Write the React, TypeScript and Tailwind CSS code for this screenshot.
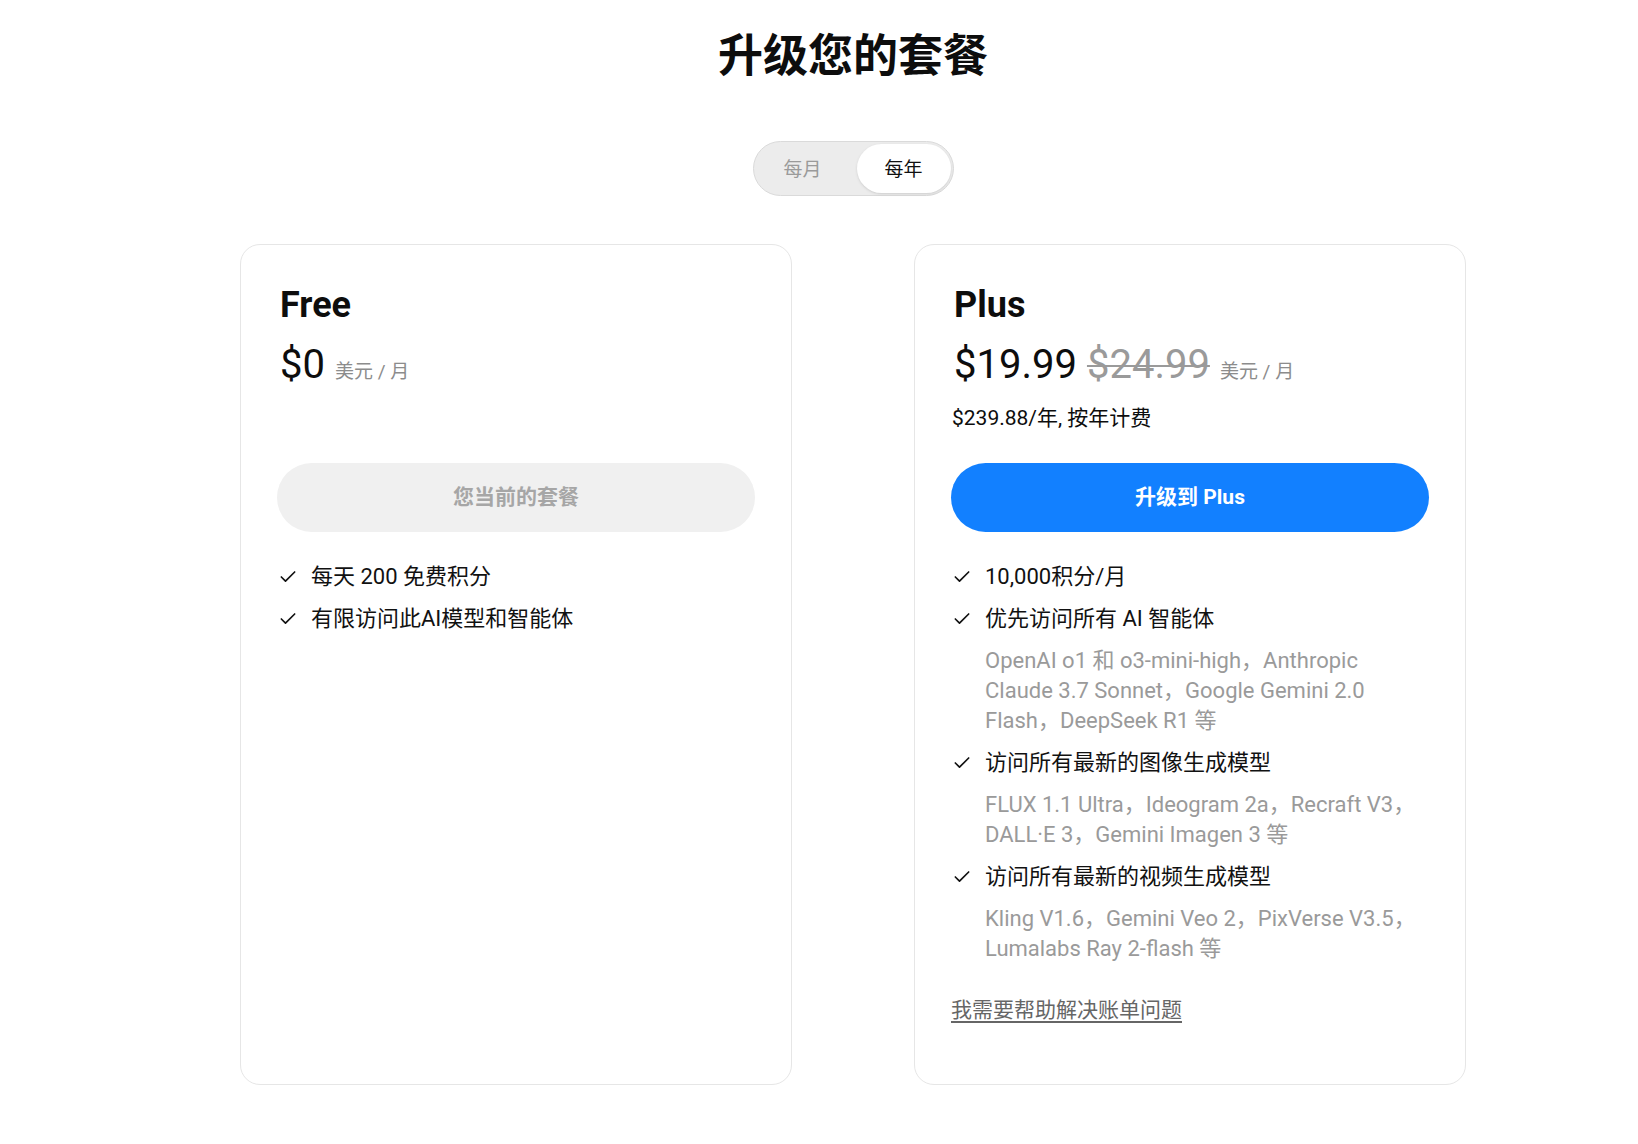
import { Check } from 'lucide-react';

const font = { fontFamily: 'Roboto, "Noto Sans CJK SC", sans-serif' };

type Feature = { title: string; detail?: string };

const freeFeatures: Feature[] = [
  { title: '每天 200 免费积分' },
  { title: '有限访问此AI模型和智能体' },
];

const plusFeatures: Feature[] = [
  { title: '10,000积分/月' },
  {
    title: '优先访问所有 AI 智能体',
    detail: 'OpenAI o1 和 o3-mini-high，Anthropic Claude 3.7 Sonnet，Google Gemini 2.0 Flash，DeepSeek R1 等',
  },
  {
    title: '访问所有最新的图像生成模型',
    detail: 'FLUX 1.1 Ultra，Ideogram 2a，Recraft V3，DALL·E 3，Gemini Imagen 3 等',
  },
  {
    title: '访问所有最新的视频生成模型',
    detail: 'Kling V1.6，Gemini Veo 2，PixVerse V3.5，Lumalabs Ray 2-flash 等',
  },
];

function FeatureList({ items }: { items: Feature[] }) {
  return (
    <ul className="mt-[30px] flex flex-col gap-3">
      {items.map((f) => (
        <li key={f.title} className="flex flex-col gap-3">
          <div className="flex items-center gap-[13px] pl-[1px] text-[22px] leading-[30px] text-[#111]">
            <Check size={20} strokeWidth={2} className="shrink-0 text-[#111]" />
            <span>{f.title}</span>
          </div>
          {f.detail && (
            <p className="pl-[34px] text-[22px] leading-[30px] text-[#9a9a9a]">{f.detail}</p>
          )}
        </li>
      ))}
    </ul>
  );
}

function PlanCard({
  name,
  price,
  oldPrice,
  note,
  current,
  features,
  help,
}: {
  name: string;
  price: string;
  oldPrice?: string;
  note?: string;
  current?: boolean;
  features: Feature[];
  help?: boolean;
}) {
  return (
    <div className="flex w-[552px] flex-col rounded-[20px] border border-[#e6e6e6] bg-white px-[36px] pt-[38px] pb-[59px]">
      <h2 className="pl-[3px] text-[36px] font-bold leading-[44px] text-[#0d0d0d]">{name}</h2>
      <div className="mt-[14px] flex items-baseline gap-[10px] pl-[3px] leading-[48px]">
        <span className="text-[40px] text-[#0d0d0d]">{price}</span>
        {oldPrice && <span className="text-[40px] text-[#9a9a9a] line-through decoration-2">{oldPrice}</span>}
        <span className="text-[19px] text-[#8c8c8c]">美元 / 月</span>
      </div>
      <div className="mt-[7px] h-[30px] pl-[1px] text-[21px] leading-[30px] text-[#0d0d0d]">{note}</div>
      {current ? (
        <button className="mt-[30px] h-[69px] w-full rounded-full bg-[#f0f0f0] text-[21px] font-bold text-[#a6a6a6]">
          您当前的套餐
        </button>
      ) : (
        <button className="mt-[30px] h-[69px] w-full rounded-full bg-[#1280ff] text-[21px] font-bold text-white">
          升级到 Plus
        </button>
      )}
      <FeatureList items={features} />
      {help && (
        <a className="mt-[31px] text-[21px] leading-[30px] text-[#666] underline underline-offset-4">
          我需要帮助解决账单问题
        </a>
      )}
    </div>
  );
}

export default function App() {
  return (
    <div style={font} className="min-h-screen bg-white pl-[68px] pt-[34px] pb-[60px]">
      <h1 className="text-center text-[45px] font-bold leading-[45px] text-[#0d0d0d]">升级您的套餐</h1>
      <div className="mt-[62px] flex justify-center">
        <div className="flex gap-[7px] rounded-full border border-[#dadada] bg-[#ececec] p-[2px]">
          <button className="h-[49px] w-[94px] rounded-full pt-[3px] text-[19px] text-[#9a9a9a]">每月</button>
          <button className="h-[49px] w-[94px] rounded-full bg-white pt-[3px] text-[19px] text-[#111] shadow-sm">每年</button>
        </div>
      </div>
      <div className="mt-[48px] flex justify-center gap-[122px]">
        <PlanCard name="Free" price="$0" current features={freeFeatures} />
        <PlanCard
          name="Plus"
          price="$19.99"
          oldPrice="$24.99"
          note="$239.88/年, 按年计费"
          features={plusFeatures}
          help
        />
      </div>
    </div>
  );
}
